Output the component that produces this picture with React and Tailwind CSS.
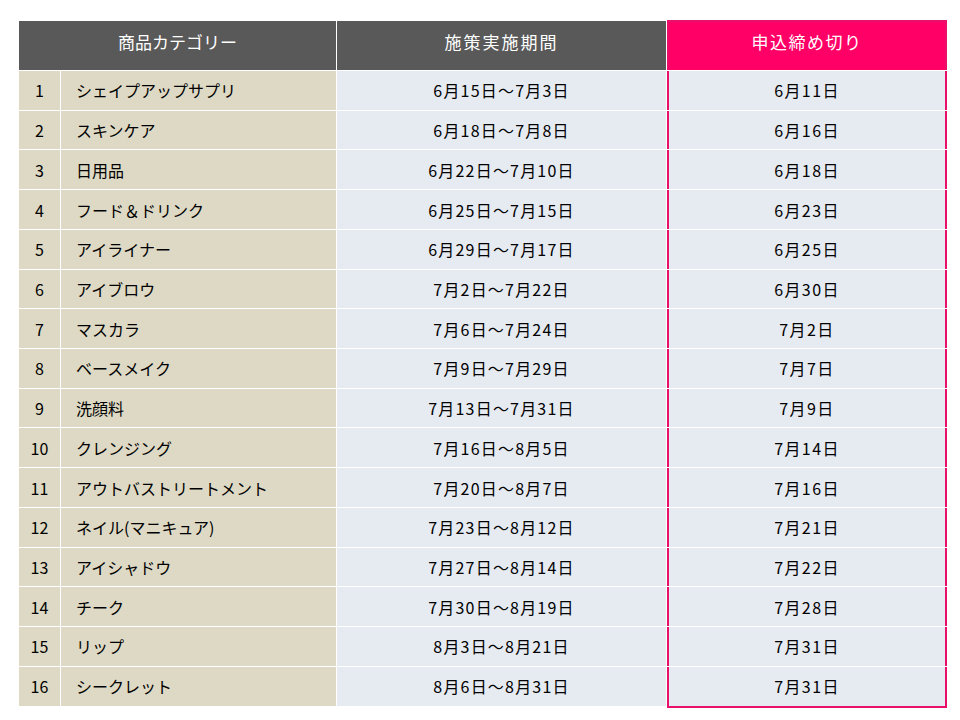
const rows = [
  ["1", "シェイプアップサプリ", "6月15日～7月3日", "6月11日"],
  ["2", "スキンケア", "6月18日～7月8日", "6月16日"],
  ["3", "日用品", "6月22日～7月10日", "6月18日"],
  ["4", "フード＆ドリンク", "6月25日～7月15日", "6月23日"],
  ["5", "アイライナー", "6月29日～7月17日", "6月25日"],
  ["6", "アイブロウ", "7月2日～7月22日", "6月30日"],
  ["7", "マスカラ", "7月6日～7月24日", "7月2日"],
  ["8", "ベースメイク", "7月9日～7月29日", "7月7日"],
  ["9", "洗顔料", "7月13日～7月31日", "7月9日"],
  ["10", "クレンジング", "7月16日～8月5日", "7月14日"],
  ["11", "アウトバストリートメント", "7月20日～8月7日", "7月16日"],
  ["12", "ネイル(マニキュア)", "7月23日～8月12日", "7月21日"],
  ["13", "アイシャドウ", "7月27日～8月14日", "7月22日"],
  ["14", "チーク", "7月30日～8月19日", "7月28日"],
  ["15", "リップ", "8月3日～8月21日", "7月31日"],
  ["16", "シークレット", "8月6日～8月31日", "7月31日"],
];

export default function App() {
  return (
    <div
      className="w-[960px] h-[720px] bg-white pt-[21px] pl-[19px]"
      style={{ fontFamily: '"Noto Sans CJK JP", "Noto Sans", sans-serif' }}
    >
      <div className="grid grid-cols-[41px_275px_329px_280px] gap-x-px gap-y-px w-max bg-white">
        {/* header */}
        <div className="col-span-2 h-[49px] bg-[#595959] text-white text-[17px] flex items-center justify-center pb-[8px]">
          商品カテゴリー
        </div>
        <div className="h-[49px] bg-[#595959] text-white text-[17px] flex items-center justify-center pb-[8px] tracking-[2px]">
          施策実施期間
        </div>
        <div className="h-[50px] -mt-px bg-[#ff0066] border-2 border-b-0 border-[#e8106a] text-white text-[17px] flex items-center justify-center pb-[8px] tracking-[1.5px]">
          申込締め切り
        </div>

        {rows.map((r, i) => {
          const last = i === rows.length - 1;
          return [
            <div
              key={`n${i}`}
              className="h-[38.73px] bg-[#ddd9c4] text-[16px] text-black flex items-center justify-center"
            >
              {r[0]}
            </div>,
            <div
              key={`c${i}`}
              className="h-[38.73px] bg-[#ddd9c4] text-[16px] text-black flex items-center pl-[15px]"
            >
              {r[1]}
            </div>,
            <div
              key={`p${i}`}
              className="h-[38.73px] bg-[#e6eaf1] text-[16px] text-black flex items-center justify-center tracking-[1.2px]"
            >
              {r[2]}
            </div>,
            <div
              key={`d${i}`}
              className={
                "bg-[#e6eaf1] text-[16px] text-black flex items-center justify-center tracking-[1.4px] border-x-2 border-[#e8106a] " +
                (last ? "h-[40.73px] border-b-2" : "h-[38.73px]")
              }
            >
              {r[3]}
            </div>,
          ];
        })}
      </div>
    </div>
  );
}
